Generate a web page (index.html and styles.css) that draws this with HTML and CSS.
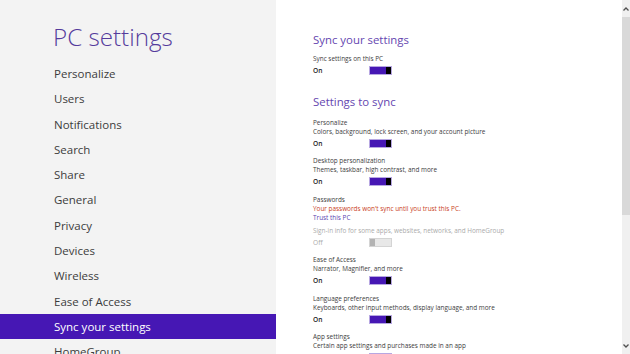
FILE: index.html
```html
<!DOCTYPE html>
<html lang="en">
<head>
    <meta charset="UTF-8">
    <title>PC settings</title>
    <link rel="stylesheet" href="styles.css">
</head>
<body>
    <div class="screen">
        <!-- Left navigation -->
        <div class="nav">
            <h1 class="nav-title">PC settings</h1>
            <ul class="nav-list">
                <li>Personalize</li>
                <li>Users</li>
                <li>Notifications</li>
                <li>Search</li>
                <li>Share</li>
                <li>General</li>
                <li>Privacy</li>
                <li>Devices</li>
                <li>Wireless</li>
                <li>Ease of Access</li>
                <li class="selected">Sync your settings</li>
                <li>HomeGroup</li>
            </ul>
        </div>
        <!-- Settings pane -->
        <div class="content">
            <h2 class="section-title">Sync your settings</h2>
            <div class="setting first">
                <div class="label">Sync settings on this PC</div>
                <div class="row"><span class="state">On</span><span class="toggle on"><span class="thumb"></span></span></div>
            </div>

            <h2 class="section-title second">Settings to sync</h2>
            <div class="setting second-first">
                <div class="label">Personalize</div>
                <div class="label">Colors, background, lock screen, and your account picture</div>
                <div class="row"><span class="state">On</span><span class="toggle on"><span class="thumb"></span></span></div>
            </div>
            <div class="setting">
                <div class="label">Desktop personalization</div>
                <div class="label">Themes, taskbar, high contrast, and more</div>
                <div class="row"><span class="state">On</span><span class="toggle on"><span class="thumb"></span></span></div>
            </div>
            <div class="setting">
                <div class="label">Passwords</div>
                <div class="label warning">Your passwords won't sync until you trust this PC.</div>
                <div class="label link">Trust this PC</div>
                <div class="label disabled spaced">Sign-in info for some apps, websites, networks, and HomeGroup</div>
                <div class="row disabled"><span class="state">Off</span><span class="toggle off"><span class="thumb"></span></span></div>
            </div>
            <div class="setting">
                <div class="label">Ease of Access</div>
                <div class="label">Narrator, Magnifier, and more</div>
                <div class="row"><span class="state">On</span><span class="toggle on"><span class="thumb"></span></span></div>
            </div>
            <div class="setting">
                <div class="label">Language preferences</div>
                <div class="label">Keyboards, other input methods, display language, and more</div>
                <div class="row"><span class="state">On</span><span class="toggle on"><span class="thumb"></span></span></div>
            </div>
            <div class="setting">
                <div class="label">App settings</div>
                <div class="label">Certain app settings and purchases made in an app</div>
                <div class="row"><span class="state">On</span><span class="toggle on"><span class="thumb"></span></span></div>
            </div>
        </div>
        <!-- Scrollbar -->
        <div class="scrollbar">
            <div class="arrow">
                <svg width="6" height="4" viewBox="0 0 6 4"><path d="M0.5 3.5 L3 1 L5.5 3.5" fill="none" stroke="#505050" stroke-width="1.3"/></svg>
            </div>
            <div class="track"><div class="scroll-thumb"></div></div>
            <div class="arrow">
                <svg width="6" height="4" viewBox="0 0 6 4"><path d="M0.5 0.5 L3 3 L5.5 0.5" fill="none" stroke="#505050" stroke-width="1.3"/></svg>
            </div>
        </div>
    </div>
</body>
</html>
```

FILE: styles.css
```css
/* Global Styling */
html, body {
    margin: 0;
    height: 100%;
    overflow: hidden;
}
body {
    font-family: "Open Sans", "Noto Sans", sans-serif;
    color: #3a3a3a;
}
.screen {
    display: flex;
    width: 630px;
    height: 354px;
    overflow: hidden;
}
/* Left Navigation */
.nav {
    width: 276px;
    flex-shrink: 0;
    background-color: #f3f3f3;
}
.nav-title {
    margin: 19px 0 0 53px;
    font-size: 24.2px;
    font-weight: 300;
    line-height: 36px;
    color: #553b9c;
}
.nav-list {
    list-style: none;
    margin: 6px 0 0;
    padding: 0;
}
.nav-list li {
    height: 25.3px;
    line-height: 25.3px;
    padding-left: 54px;
    font-size: 11.5px;
    color: #3c3c3c;
}
.nav-list li.selected {
    background-color: #4617b4;
    color: #ffffff;
}
/* Settings Pane */
.content {
    flex-grow: 1;
    background-color: #ffffff;
    padding: 31px 0 0 37px;
}
.section-title {
    margin: 0;
    font-size: 11.4px;
    font-weight: 400;
    line-height: 18px;
    color: #6546b0;
}
.section-title.second {
    margin-top: 16px;
}
.setting {
    margin-top: 7px;
}
.setting.first {
    margin-top: 5px;
}
.setting.second-first {
    margin-top: 7px;
}
.label {
    font-size: 6.4px;
    line-height: 9px;
    color: #3c3c3c;
    white-space: nowrap;
}
.label.warning {
    color: #c9401c;
}
.label.link {
    color: #5b3fb0;
}
.label.disabled {
    color: #aaaaaa;
}
.label.spaced {
    margin-top: 4px;
}
.row {
    display: flex;
    align-items: center;
    height: 12px;
    margin-top: 1.5px;
}
.state {
    width: 56px;
    font-size: 6.6px;
    font-weight: 600;
    color: #222222;
}
.row.disabled .state {
    font-weight: 400;
    color: #aaaaaa;
}
/* Toggle Switch */
.toggle {
    display: flex;
    width: 21px;
    height: 7px;
    border: 1px solid #b7a7e2;
    background-color: #4617b4;
    justify-content: flex-end;
}
.toggle .thumb {
    width: 5px;
    background-color: #000000;
}
.toggle.off {
    border-color: #d4d4d4;
    background-color: #e8e8e8;
    justify-content: flex-start;
}
.toggle.off .thumb {
    background-color: #b3b3b3;
}
/* Scrollbar */
.scrollbar {
    width: 8px;
    flex-shrink: 0;
    display: flex;
    flex-direction: column;
    background-color: #f0f0f0;
}
.arrow {
    height: 17px;
    display: flex;
    align-items: center;
    justify-content: center;
}
.track {
    flex-grow: 1;
}
.scroll-thumb {
    height: 198px;
    background-color: #d9d9d9;
}
```
